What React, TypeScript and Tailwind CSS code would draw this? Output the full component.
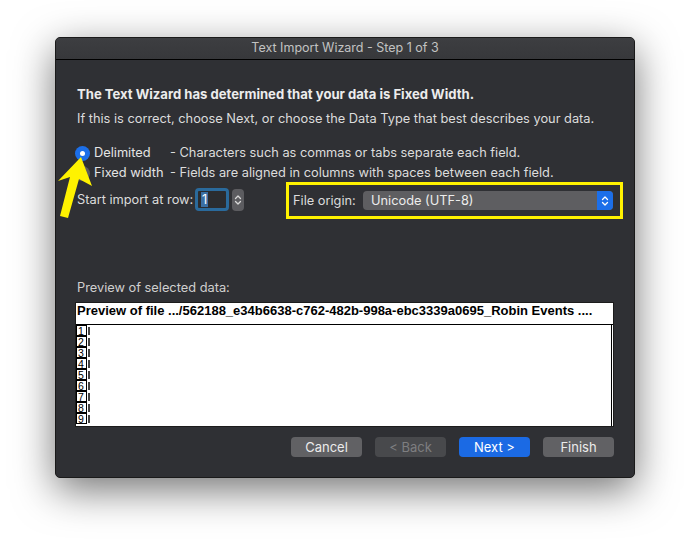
import React from "react";

const Chevrons = ({ color = "#e5e5e5" }: { color?: string }) => (
  <svg width="8" height="12" viewBox="0 0 8 12" fill="none">
    <path d="M1.5 4.5 L4 2 L6.5 4.5" stroke={color} strokeWidth="1.3" strokeLinecap="round" strokeLinejoin="round" />
    <path d="M1.5 7.5 L4 10 L6.5 7.5" stroke={color} strokeWidth="1.3" strokeLinecap="round" strokeLinejoin="round" />
  </svg>
);

export default function App() {
  const rows = [1, 2, 3, 4, 5, 6, 7, 8, 9];
  return (
    <div
      className="w-[690px] h-[551px] bg-white relative overflow-hidden"
      style={{ fontFamily: "Inter, Roboto, 'Noto Sans', sans-serif" }}
    >
      <div className="pt-[37px] pl-[55px]">
        <div className="w-[580px] h-[441px] rounded-[5px] bg-[#2f3034] border border-[#1a1a1a] shadow-[0_12px_40px_rgba(0,0,0,0.55)] flex flex-col overflow-hidden">
          {/* Title bar */}
          <div className="h-[22px] bg-gradient-to-b from-[#3d3e41] to-[#37383b] border-b border-black flex items-center justify-center text-[12.5px] text-[#c2c2c2] shrink-0">
            Text Import Wizard - Step 1 of 3
          </div>
          {/* Body */}
          <div className="flex flex-col pl-[21px] pr-[10px] pt-[26px] text-[12.8px] text-[#dcdcdc] leading-[16px] whitespace-nowrap">
            <div className="font-bold text-[#ececec] text-[13.1px]">The Text Wizard has determined that your data is Fixed Width.</div>
            <div className="mt-[9px]">If this is correct, choose Next, or choose the Data Type that best describes your data.</div>

            <div className="mt-[16px] flex flex-col">
              <div className="flex items-center h-[20px] -ml-[2px]">
                <span className="w-[15px] h-[15px] rounded-full bg-[#1c6fe9] flex items-center justify-center shrink-0">
                  <span className="w-[5px] h-[5px] rounded-full bg-white" />
                </span>
                <span className="ml-[4px] w-[76px] text-[#e4e4e4] shrink-0">Delimited</span>
                <span>- Characters such as commas or tabs separate each field.</span>
              </div>
              <div className="flex items-center h-[20px] -ml-[2px]">
                <span className="w-[15px] h-[15px] rounded-full bg-[#5b5b5f] shrink-0" />
                <span className="ml-[4px] w-[76px] text-[#e4e4e4] shrink-0">Fixed width</span>
                <span>- Fields are aligned in columns with spaces between each field.</span>
              </div>
            </div>

            <div className="flex items-start mt-[-1px]">
              <div className="flex items-center pt-[6px] shrink-0 w-[167px]">
                <span>Start import at row:</span>
                <div className="ml-auto w-[34px] h-[23px] rounded-[4px] border-[3px] border-[#2a6a9c] bg-[#2b2c2f] flex items-center pl-[3px]">
                  <span className="bg-[#3b6fa3] text-white px-[1px] leading-[15px]">1</span>
                </div>
                <div className="ml-[3px] w-[12px] h-[22px] rounded-[4px] bg-[#5c5c60] flex items-center justify-center">
                  <Chevrons color="#d8d8d8" />
                </div>
              </div>
              <div className="ml-[42px] w-[337px] h-[37px] border-[3px] border-[#fff200] flex items-center pl-[4px] shrink-0">
                <span>File origin:</span>
                <div className="ml-auto mr-[7px] w-[250px] h-[19px] rounded-[4px] bg-[#5e5e61] flex items-center overflow-hidden">
                  <span className="flex-1 pl-[8px] text-[#ececec]">Unicode (UTF-8)</span>
                  <span className="w-[16px] h-full bg-[#1c6fe9] flex items-center justify-center">
                    <Chevrons color="#ffffff" />
                  </span>
                </div>
              </div>
            </div>

            <div className="mt-[61px] text-[#cfcfcf]">Preview of selected data:</div>

            <div
              className="mt-[6px] w-[539px] h-[125px] ml-[-2px] bg-white border border-[#1c1c1c] flex flex-col"
              style={{ fontFamily: "'Liberation Sans', Arial, sans-serif" }}
            >
              <div className="h-[22px] border-b border-black px-[1px] text-[13px] font-bold text-black leading-[15px] whitespace-nowrap overflow-hidden">
                Preview of file .../562188_e34b6638-c762-482b-998a-ebc3339a0695_Robin Events ....
              </div>
              <div className="flex-1 border-r border-black mr-[1px] flex flex-col">
                {rows.map((n) => (
                  <div key={n} className="flex h-[11px]">
                    <span className="w-[11px] h-[11px] border border-black border-t-0 first:border-t text-[10.5px] leading-[10px] text-black pl-[1px]">
                      {n}
                    </span>
                    <span className="w-[2px] h-[8px] mt-[2px] bg-[#444] ml-[1px]" />
                  </div>
                ))}
              </div>
            </div>

            <div className="mt-[10px] w-[537px] flex justify-end gap-[13px] text-[13px]">
              <button className="w-[71px] h-[20px] rounded-[4px] bg-[#616164] text-[#ebebeb] leading-[20px]">Cancel</button>
              <button className="w-[71px] h-[20px] rounded-[4px] bg-[#48494c] text-[#7e7e80] leading-[20px]">&lt; Back</button>
              <button className="w-[71px] h-[20px] rounded-[4px] bg-[#1b6ae4] text-white leading-[20px]">Next &gt;</button>
              <button className="w-[71px] h-[20px] rounded-[4px] bg-[#616164] text-[#ebebeb] leading-[20px]">Finish</button>
            </div>
          </div>
        </div>
      </div>

      {/* Yellow arrow annotation */}
      <svg className="absolute left-0 top-0 pointer-events-none" width="690" height="551">
        <polygon
          points="81,157 92,186 79,179 68,218 60,216 70,177 58,181"
          fill="#fff200"
        />
      </svg>
    </div>
  );
}
